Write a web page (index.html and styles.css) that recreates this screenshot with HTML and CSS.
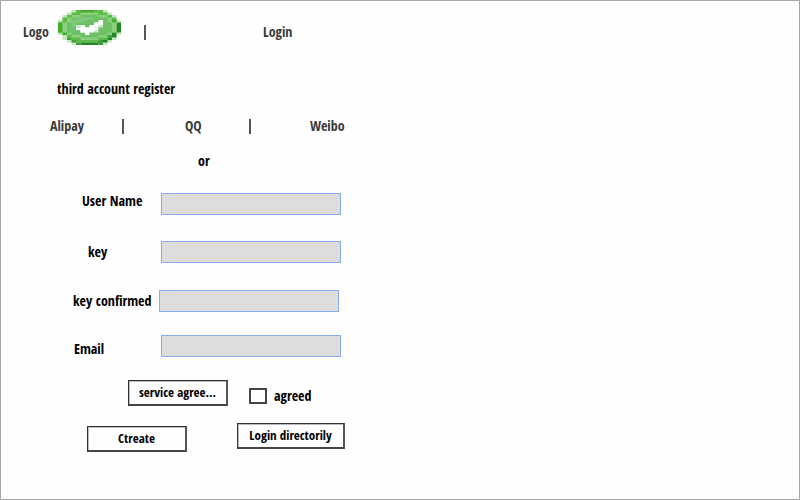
FILE: index.html
```html
<!DOCTYPE html>
<html lang="en">
<head>
<meta charset="utf-8">
<title>Register</title>
<link rel="stylesheet" href="styles.css">
</head>
<body>
<header class="top">
  <span class="brand">Logo</span>
  <svg class="logo" viewBox="0 0 14 14" preserveAspectRatio="none" aria-hidden="true">
    <path fill="#c3e8bb" d="M3 0h8v1h1v1h1v2h1v6h-1v2h-1v1h-1v1H3v-1H2v-1H1v-2H0V4h1V2h1V1h1z"/>
    <path fill="#5cba46" d="M4 0h6v1h1v1h1v1h1v6h-1v2h-1v1h-1v1H4v-1H3v-1H2v-1H1V9H0V5h1V3h1V2h1V1h1z"/>
    <path fill="#42ad2b" d="M0 5h1v4H0zM5 0h3v1H5zM1 9h1v1H1zM12 4h1v1h-1z"/>
    <path fill="#23852a" d="M13 5h1v4h-1zM12 9h1v2h-1zM11 11h1v1h-1zM10 12h1v1h-1zM5 13h4v1H5z"/>
    <path fill="#409a3e" d="M9 12h1v1H9zM4 13h1v1H4zM9 13h1v1H9zM11 10h1v1h-1zM3 12h1v1H3zM2 11h1v1H2zM12 8h1v1h-1z"/>
    <path fill="#8bd07d" d="M5 1h4v1h2v1h1v2h1v4h-1v1h-1v1H9v1H5v-1H3v-1H2V9H1V5h1V3h1V2h2z"/>
    <path fill="#6cc066" d="M5 2h4v1h2v2h1v4h-1v1H9v1H5v-1H3V9H2V5h1V3h2z"/>
    <path fill="#7cc97c" d="M3 4h1V3h4v1H6v1H4v2H3z"/>
    <path fill="#c8eac4" d="M4 6h1v1H4zM7 6h1v1H7zM8 5h1v1H8zM9 6h1v1H9zM8 8h1v1H8z"/>
    <path fill="#fff" d="M9 5V4h1v2H9v1H8v1H7v2H6V9H5V8H4V7h1V6h1v1h1V6h1V5z"/>
    <path fill="#fff" d="M5 7h4v1H8v1H5z"/>
  </svg>
  <span class="bar"></span>
  <a class="login" href="#">Login</a>
</header>
<main>
  <h1>third account register</h1>
  <nav class="third">
    <a href="#">Alipay</a><span class="bar"></span><a href="#">QQ</a><span class="bar"></span><a href="#">Weibo</a>
  </nav>
  <p class="or">or</p>
  <form>
    <div class="row row-user"><label for="user">User Name</label><input class="field" id="user" type="text"></div>
    <div class="row row-key"><label for="key">key</label><input class="field" id="key" type="password"></div>
    <div class="row row-confirm"><label for="confirm">key confirmed</label><input class="field" id="confirm" type="password"></div>
    <div class="row row-email"><label for="email">Email</label><input class="field" id="email" type="email"></div>
    <div class="terms">
      <button class="btn" type="button">service agree...</button>
      <input class="check" id="agreed" type="checkbox"><label for="agreed">agreed</label>
    </div>
    <div class="actions">
      <button class="btn btn-create" type="submit">Ctreate</button>
      <button class="btn btn-direct" type="button">Login directorily</button>
    </div>
  </form>
</main>
</body>
</html>
```
FILE: styles.css
```css
* { box-sizing: border-box; }
body {
  margin: 0;
  min-height: 100vh;
  border: 1px solid #a6a6a6;
  background: #fefefe;
  color: #000;
  font: bold 14px/16px "Open Sans Condensed", "Noto Sans Condensed", "Roboto Condensed", Lato, sans-serif;
  white-space: nowrap;
}
a { color: inherit; text-decoration: none; }
.top, .third { align-items: center; color: #3a3a3a; }
.top { display: flex; padding: 9px 0 0 22px; }
.brand { width: 35px; }
.logo { width: 63px; height: 35px; }
.bar { width: 2px; height: 15px; background: #555; }
.top .bar { margin: 10px 0 0 23px; }
.brand, .login { margin-top: 9px; }
.login { margin-left: 117px; }
h1 { margin: 36px 0 0 56px; font-size: inherit; }
.third { display: grid; grid-template-columns: 72px 63px 64px 61px auto; margin: 21px 0 0 49px; }
.or { margin: 19px 0 0 197px; }
form { margin-top: 24px; }
.row { display: flex; align-items: center; justify-content: space-between; width: 340px; margin-bottom: 26px; }
.row-user { padding-left: 81px; align-items: flex-start; }
.row-key { padding-left: 87px; margin-bottom: 27px; }
.row-confirm { padding-left: 72px; width: 338px; margin-bottom: 23px; }
.row-email { padding-left: 73px; align-items: flex-end; margin-bottom: 23px; }
.field { width: 180px; height: 22px; margin: 0; padding: 0 4px; border: 1px solid #88aaf2; background: #ddd; font: inherit; }
.btn {
  height: 26px;
  padding: 0 0 2px;
  border: 1px solid #333;
  border-right: 2px solid #555;
  border-bottom: 2px solid #444;
  box-shadow: inset 1px 1px #bbb;
  background: #fefefe;
  color: #000;
  font: inherit;
  font-size: 13px;
}
.terms { display: flex; align-items: center; padding-left: 127px; }
.terms .btn, .btn-create { width: 100px; }
.check { appearance: none; width: 18px; height: 16px; margin: 6px 7px 0 21px; border: 2px solid #444; }
.terms label { margin-top: 5px; }
.actions { display: flex; padding: 17px 0 0 86px; gap: 50px; }
.btn-create { margin-top: 3px; }
.btn-direct { width: 108px; }
```
